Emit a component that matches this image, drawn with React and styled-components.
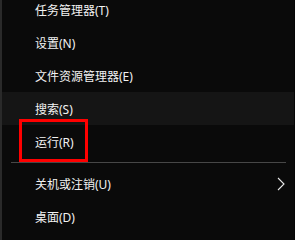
import React from "react";
import styled, { createGlobalStyle } from "styled-components";

const Global = createGlobalStyle`
  html, body { margin: 0; padding: 0; background: #0a0a0a; }
  #root { width: 295px; height: 240px; }
`;

const Menu = styled.div`
  position: relative;
  width: 295px;
  height: 240px;
  box-sizing: border-box;
  overflow: hidden;
  background: #0a0a0a;
  border-left: 2px solid #2a2a2a;
  border-right: 1px solid #060606;
  font-family: "Noto Sans", "Noto Sans CJK SC", sans-serif;
  font-size: 12px;
  color: #f2f2f2;
`;

const List = styled.div`
  display: flex;
  flex-direction: column;
  margin-top: -7px;
`;

const Item = styled.div`
  height: 33px;
  display: flex;
  align-items: center;
  justify-content: space-between;
  padding-left: 33px;
  padding-right: 9px;
  background: ${(p) => (p.$hover ? "#151515" : "transparent")};
`;

const Separator = styled.div`
  height: 1px;
  margin: 4px 8px 4px 9px;
  background: #474747;
`;

const Chevron = styled.svg`
  width: 8px;
  height: 14px;
  display: block;
`;

const Highlight = styled.div`
  position: absolute;
  left: 17px;
  top: 119px;
  width: 69px;
  height: 43px;
  box-sizing: border-box;
  border: 3px solid #ff0000;
  pointer-events: none;
`;

export default function App() {
  return (
    <>
      <Global />
      <Menu>
        <List>
          <Item>任务管理器(T)</Item>
          <Item>设置(N)</Item>
          <Item>文件资源管理器(E)</Item>
          <Item $hover>搜索(S)</Item>
          <Item>运行(R)</Item>
          <Separator />
          <Item>
            <span>关机或注销(U)</span>
            <Chevron viewBox="0 0 8 14">
              <polyline points="1,1 7,7 1,13" fill="none" stroke="#e8e8e8" strokeWidth="1.1" />
            </Chevron>
          </Item>
          <Item>桌面(D)</Item>
        </List>
        <Highlight />
      </Menu>
    </>
  );
}
